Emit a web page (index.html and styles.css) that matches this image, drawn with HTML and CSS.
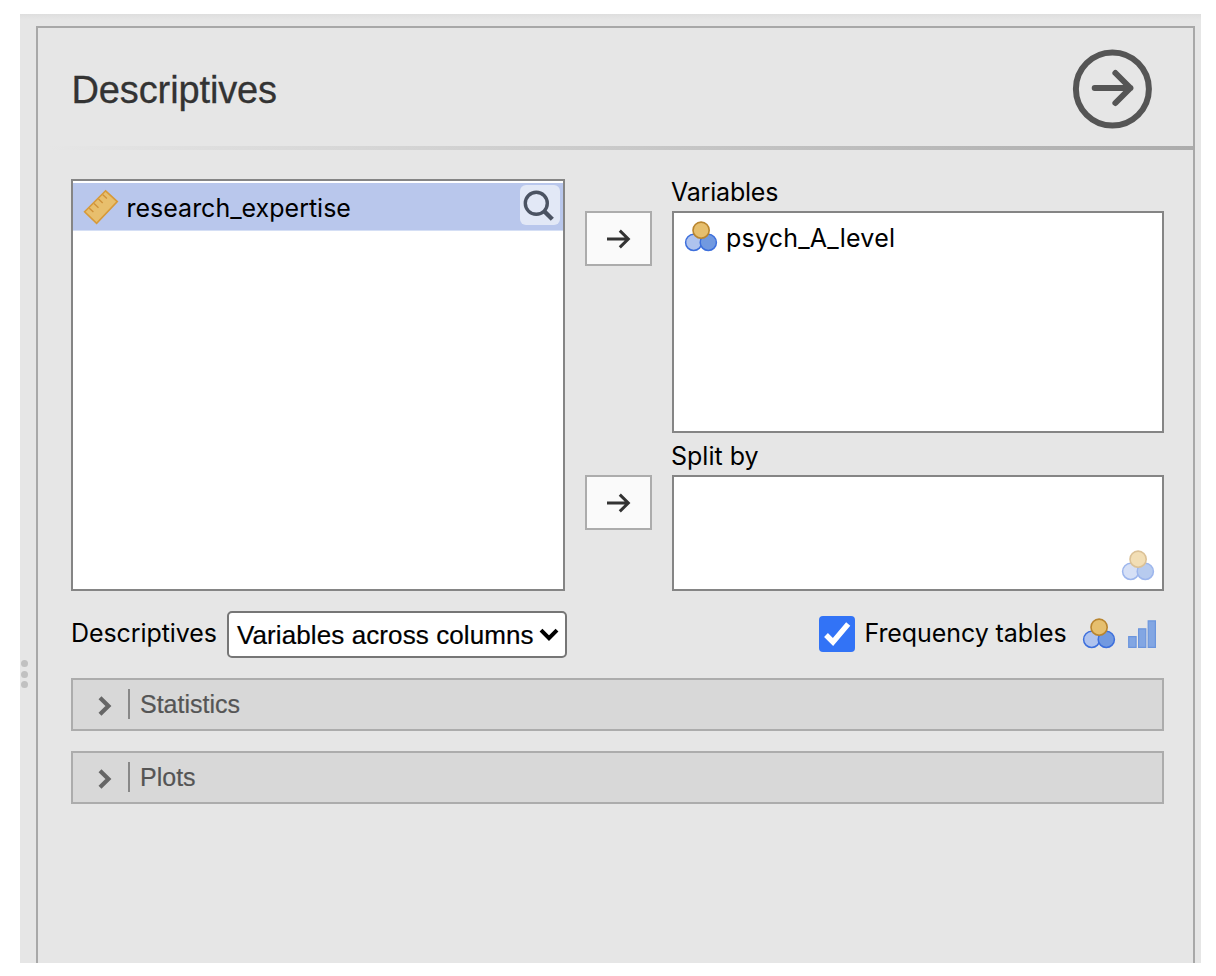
FILE: index.html
```html
<!DOCTYPE html>
<html lang="en">
<head>
<meta charset="utf-8">
<title>Descriptives</title>
<link rel="stylesheet" href="styles.css">
</head>
<body>
<svg class="defs" aria-hidden="true">
  <symbol id="nominal" viewBox="0 0 34 32">
    <circle cx="9.7" cy="21.4" r="8.1" fill="#afc3ee" stroke="#3d6fdc" stroke-width="1.5"/>
    <circle cx="24.3" cy="21.4" r="8.1" fill="#7199e0" stroke="#3d6fdc" stroke-width="1.5"/>
    <circle cx="17.1" cy="9.2" r="8.1" fill="#e6bf6e" stroke="#b9852f" stroke-width="1.6"/>
  </symbol>
  <symbol id="move" viewBox="0 0 24 20">
    <path d="M0 10H21.5M12.8 1.6L21.3 10L12.8 18.4" fill="none" stroke="#333" stroke-width="3"/>
  </symbol>
  <symbol id="chevron" viewBox="0 0 14 20">
    <path d="M2 1.8L10.4 10L2 18.2" fill="none" stroke="#666" stroke-width="4.2"/>
  </symbol>
</svg>
<div class="app">
  <div class="splitter"><i></i><i></i><i></i></div>
  <main class="panel">
    <header class="header">
      <h1 class="title">Descriptives</h1>
      <svg class="go" viewBox="0 0 80 80">
        <circle cx="40.4" cy="40" r="36.5" fill="none" stroke="#555" stroke-width="6"/>
        <path d="M22.7 39H58.4M43.4 24L58.4 39L43.4 54" fill="none" stroke="#555" stroke-width="6" stroke-linecap="round" stroke-linejoin="round"/>
      </svg>
    </header>
    <div class="rule"></div>
    <div class="content">
      <section class="picker">
        <div class="list source">
          <div class="item selected">
            <svg class="ruler" viewBox="0 0 36 36">
              <path d="M1.6 22.8L22.6 1.8L34.3 12.6L13.6 34.3Z" fill="#e8bf6d" stroke="#d79a39" stroke-width="1.6"/>
              <path d="M6.3 19.2L10.4 23M11 14.5L15.5 18.7M15.5 10L19.7 14M19.8 5.7L23.9 9.4" fill="none" stroke="#cf923a" stroke-width="1.4"/>
            </svg>
            <span class="name research">research_expertise</span>
            <span class="search">
              <svg viewBox="0 0 40 40"><circle cx="16.3" cy="18.3" r="11" fill="none" stroke="#4b5362" stroke-width="3.4"/><path d="M23.5 25.5L32.3 34.3" stroke="#4b5362" stroke-width="4.4"/></svg>
            </span>
          </div>
        </div>
        <div class="moves">
          <button class="move"><svg><use href="#move"/></svg></button>
          <button class="move"><svg><use href="#move"/></svg></button>
        </div>
        <div class="targets">
          <div class="label"><span class="variables">Variables</span></div>
          <div class="list vars">
            <div class="item"><svg class="nominal"><use href="#nominal"/></svg><span class="name psych">psych_A_level</span></div>
          </div>
          <div class="label"><span class="split-label">Split by</span></div>
          <div class="list split"><svg class="nominal faded"><use href="#nominal"/></svg></div>
        </div>
      </section>
      <section class="options">
        <span class="opt-label">Descriptives</span>
        <div class="select">
          <span class="value">Variables across columns</span>
          <svg class="caret" viewBox="0 0 20 14"><path d="M2 2.2L10 10.2L18 2.2" fill="none" stroke="#000" stroke-width="4"/></svg>
        </div>
        <div class="freq">
          <span class="check"><svg viewBox="0 0 36 36"><path d="M7 19L14 26L29.2 8" fill="none" stroke="#fff" stroke-width="5.4"/></svg></span>
          <span class="freq-label">Frequency tables</span>
          <svg class="nominal"><use href="#nominal"/></svg>
          <svg class="ordinal" viewBox="0 0 28 28"><g fill="#82a6e3" stroke="#6b95dd" stroke-width="1.2"><path d="M.7 16.7h7.4v10.6H.7zM10.6 8.8h7.2v18.5h-7.2zM20.2 .9h7.2v26.4h-7.2z"/></g></svg>
        </div>
      </section>
      <section class="drawer"><svg class="chevron"><use href="#chevron"/></svg><span class="drawer-name">Statistics</span></section>
      <section class="drawer"><svg class="chevron"><use href="#chevron"/></svg><span class="drawer-name">Plots</span></section>
    </div>
  </main>
</div>
</body>
</html>
```
FILE: styles.css
```css
* { box-sizing: border-box; }
body { margin: 0; height: 976px; padding: 14px 15px 13px 20px; background: #fff; overflow: hidden; font: 25px Inter, sans-serif; color: #000; }
svg { display: block; flex: none; }
span { white-space: nowrap; }
.defs { position: absolute; width: 0; height: 0; }
.app { display: flex; height: 949px; background: linear-gradient(#dedede, #e6e6e6 6px); }
.splitter { width: 16px; flex: none; display: flex; flex-direction: column; justify-content: center; gap: 3.5px; padding: 371px 0 0 .5px; }
.splitter i { width: 7px; height: 7px; border-radius: 50%; background: #c1c1c1; }
.panel { width: 1159px; margin-top: 12px; border: 2px solid #a8a8a8; border-bottom: 0; background: #e6e6e6; }
.header { height: 118px; display: flex; justify-content: space-between; padding: 21px 41px 0 33.5px; }
.title { margin: 19px 0 0; font: 38px/44px "Liberation Sans", Arial, sans-serif; letter-spacing: -.12px; color: #333; -webkit-text-stroke: .3px #333; }
.go { width: 80px; height: 80px; }
.rule { height: 4px; margin-left: 10px; background: linear-gradient(90deg, #e6e6e6, #acacac); }
.content { padding: 29px 29px 0 33px; }
.picker { display: flex; height: 412px; }
.list { background: #fff; border: 2px solid #858585; }
.source { width: 494px; padding-top: 2px; }
.item { display: flex; align-items: center; }
.name { padding-top: 2px; }
.psych { letter-spacing: .22px; }
.selected { height: 48px; padding: 0 3px 0 10px; background: #b9c7ec; border-bottom: 1px solid #d5dff5; }
.ruler { width: 36px; height: 36px; margin-right: 7.5px; }
.search { width: 40px; height: 40px; margin: -3px 0 0 auto; border-radius: 6px; background: #e2e8f6; }
.moves { width: 67px; margin: 32px 20px 0; display: flex; flex-direction: column; gap: 209px; flex: none; }
.move { height: 55px; padding: 0; border: 2px solid #acacac; background: #fafafa; display: grid; place-items: center; }
.move svg { width: 24px; height: 20px; }
.targets { width: 492px; }
.label { height: 32px; line-height: 27px; padding-bottom: 5px; margin-left: -1px; letter-spacing: -.2px; }
.split-label { letter-spacing: 0; }
.vars { height: 222px; padding: 8px 0 0 10px; }
.vars + .label { height: 42px; padding-top: 10px; }
.nominal { width: 34px; height: 32px; }
.vars .nominal { margin-right: 8px; }
.split { height: 116px; display: flex; justify-content: flex-end; align-items: flex-end; padding: 0 7px 7px 0; }
.faded { opacity: .5; }
.options { display: flex; height: 47px; margin-top: 20px; align-items: center; }
.opt-label { width: 156px; padding-bottom: 3px; letter-spacing: -.08px; }
.select { width: 340px; height: 47px; display: flex; align-items: center; border: 2px solid #767676; border-radius: 5px; background: #fff; font: 26px "Liberation Sans", Arial, sans-serif; letter-spacing: .1px; padding: 0 6px 0 8px; -webkit-text-stroke: .2px #000; }
.value { padding-top: 2px; }
.caret { width: 20px; height: 14px; margin-left: auto; }
.freq { display: flex; align-items: center; margin-left: auto; padding: 0 8px 2px 0; }
.check { width: 36px; height: 36px; border-radius: 4px; background: #3273f6; margin-right: 9.5px; }
.freq-label { width: 217.5px; padding-bottom: 1px; letter-spacing: -.08px; }
.ordinal { width: 28px; height: 28px; margin-left: 12px; }
.drawer { display: flex; align-items: center; height: 53px; margin-top: 20px; border: 2px solid #acacac; background: #d8d8d8; padding-left: 25px; }
.chevron { width: 14px; height: 20px; margin: 3px 16px 0 0; }
.drawer-name { height: 30px; margin-bottom: 1px; border-left: 2px solid #888; padding-left: 10px; font: 25px/31px "Liberation Sans", Arial, sans-serif; color: #555; -webkit-text-stroke: .2px #555; }
```
